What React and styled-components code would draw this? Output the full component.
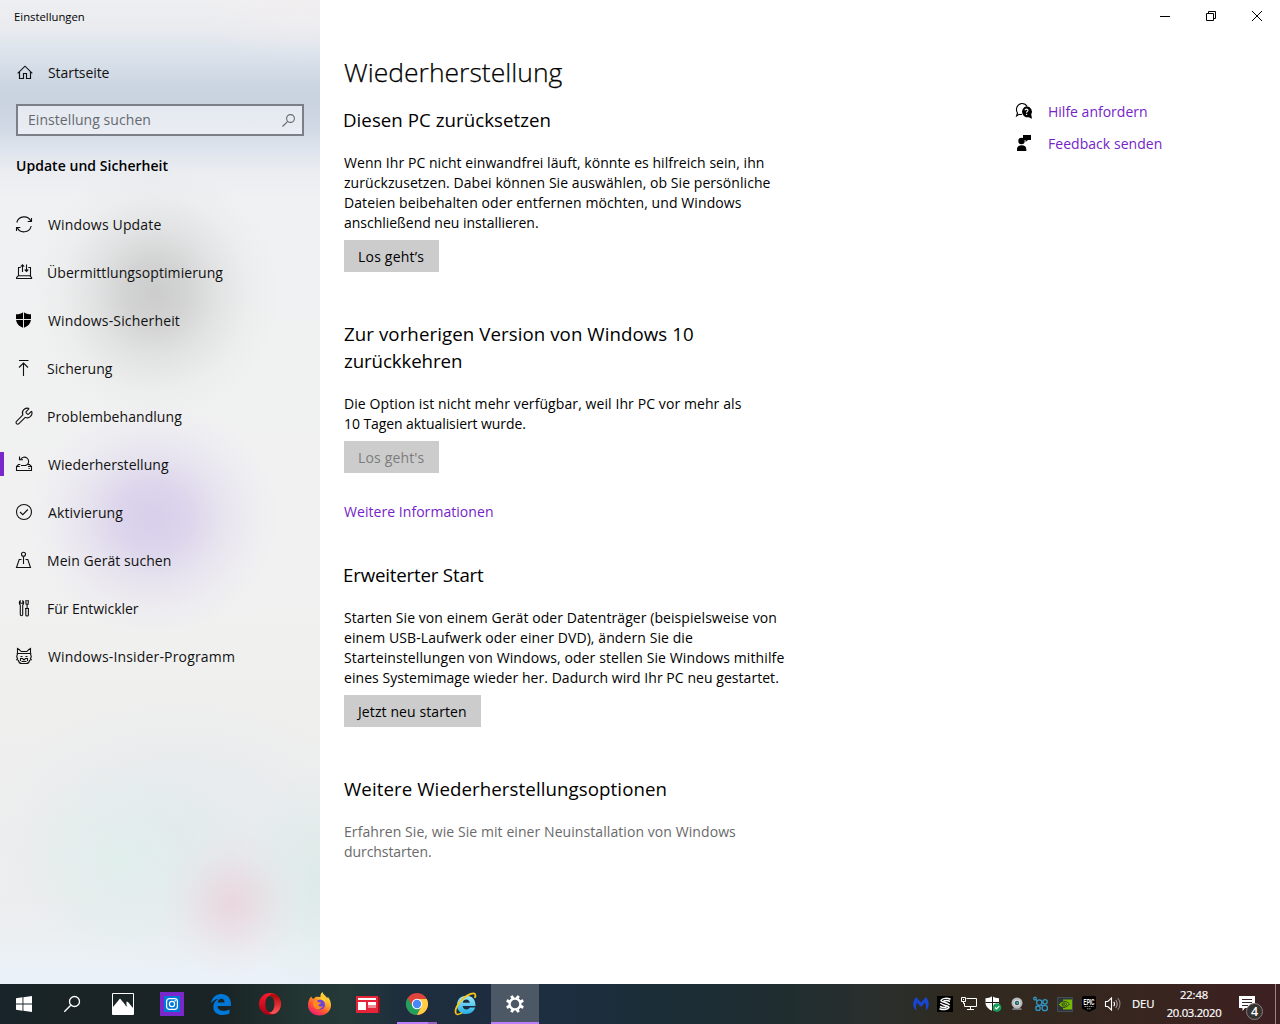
import React from "react";
import styled, { createGlobalStyle } from "styled-components";

const GlobalStyle = createGlobalStyle`
    * {
        box-sizing: border-box;
    }
    body {
        margin: 0;
        overflow: hidden;
        font-family: "Open Sans", "Noto Sans", sans-serif;
        font-size: 14px;
        line-height: 20px;
        color: #000;
        background: #fff;
    }
    svg {
        display: block;
        overflow: visible;
        flex: none;
    }
`;

const Screen = styled.div`
    width: 1280px;
    height: 1024px;
    display: flex;
    flex-direction: column;
    background: #fff;
`;

const Window = styled.div`
    flex: 1;
    display: flex;
    min-height: 0;
`;

/* text helper: one unwrapped line with its own tracking */
const Line = styled.span`
    display: block;
    white-space: nowrap;
    letter-spacing: ${p => p.$ls || 0}px;
`;

/* ---------- sidebar ---------- */

const Sidebar = styled.div`
    width: 320px;
    height: 984px;
    flex: none;
    background:
        radial-gradient(ellipse 125px 130px at 155px 293px, rgba(115,115,112,0.29), rgba(118,118,116,0.24) 25%, rgba(130,130,130,0.13) 50%, rgba(150,150,150,0.04) 76%, transparent 100%),
        radial-gradient(ellipse 125px 115px at 153px 518px, rgba(150,118,220,0.28), rgba(152,120,218,0.23) 28%, rgba(160,130,222,0.12) 55%, rgba(175,150,240,0.05) 78%, transparent 100%),
        radial-gradient(ellipse 70px 75px at 232px 904px, rgba(238,175,192,0.34), rgba(235,180,196,0.22) 35%, rgba(235,190,202,0.08) 68%, transparent 100%),
        radial-gradient(ellipse 90px 120px at 330px 885px, rgba(205,232,226,0.55), rgba(205,232,226,0.2) 55%, transparent 100%),
        radial-gradient(ellipse 110px 100px at 122px 860px, rgba(220,240,234,0.6), rgba(220,240,234,0.25) 50%, transparent 100%),
        radial-gradient(ellipse 190px 140px at 180px 835px, rgba(218,230,236,0.5), rgba(218,230,236,0.28) 50%, transparent 100%),
        radial-gradient(ellipse 110px 60px at 300px 0, rgba(243,238,240,0.7), transparent 100%),
        linear-gradient(to bottom, #eeeff1 0, #e9ebef 28px, #dce3ec 54px, #ccd6e2 84px, #c9d3df 100px, #cfd8e4 125px, #dde3ec 148px, #ebedf1 172px, #f0f1f2 200px, #f1f1f1 560px, #efefee 700px, #ecedee 900px, #ebf1f6 965px, #eaf1f9 984px);
`;

const WindowTitle = styled.div`
    height: 33px;
    padding: 1px 0 0 14px;
    font-size: 11.3px;
    line-height: 32px;
`;

const NavItem = styled.div`
    position: relative;
    height: 48px;
    padding-left: 16px;
    display: flex;
    align-items: center;
    gap: ${p => p.$gap || 16}px;
    color: #111;
`;

const HomeItem = styled(NavItem)`
    margin-top: 16px;
`;

const ActiveBar = styled.div`
    position: absolute;
    left: 0;
    top: 11px;
    width: 4px;
    height: 24px;
    background: #7a28cb;
`;

const SearchBox = styled.div`
    margin: 7px 16px 0;
    height: 32px;
    border: 2px solid #7b7f87;
    background: rgba(255,255,255,0.5);
    padding: 0 7px 0 10px;
    display: flex;
    align-items: center;
    justify-content: space-between;
    color: #65696f;
`;

const Category = styled.div`
    margin: 20px 0 0 16px;
    font-weight: 600;
`;

const Nav = styled.div`
    margin-top: 25px;
`;

/* ---------- content ---------- */

const Main = styled.div`
    flex: 1;
    display: flex;
    flex-direction: column;
`;

const Controls = styled.div`
    height: 32px;
    display: flex;
    justify-content: flex-end;
`;

const Control = styled.div`
    width: 46px;
    height: 32px;
    display: flex;
    align-items: center;
    justify-content: center;
`;

const Content = styled.div`
    display: flex;
    padding: 22px 0 0 24px;
`;

const Column = styled.div`
    width: 672px;
    flex: none;
`;

const Title = styled.h1`
    margin: 0 0 16px;
    font-size: 26.5px;
    font-weight: 300;
    line-height: 36px;
    color: #000;
    -webkit-text-stroke: 0.25px #000;
`;

const Section = styled.div`
    margin-bottom: ${p => p.$after || 48}px;
`;

const Heading = styled.h2`
    margin: 0 0 20px ${p => (p.$outdent ? -1 : 0)}px;
    font-size: 18.7px;
    font-weight: 400;
    line-height: 27px;
`;

const Text = styled.div`
    color: ${p => (p.$muted ? "#6a6a6a" : "#000")};
`;

const Button = styled.div`
    margin-top: 7px;
    width: ${p => p.$width}px;
    height: 32px;
    padding: 7px 14px 0;
    background: #ccc;
    line-height: 20px;
    color: ${p => (p.$disabled ? "#7c7c7c" : "#000")};
`;

const Link = styled.div`
    color: #7424c8;
`;

const MoreLink = styled(Link)`
    margin-top: 29px;
`;

const Aside = styled.div`
    padding-top: 42px;
`;

const HelpRow = styled.div`
    height: 32px;
    display: flex;
    align-items: center;
    gap: 16px;
`;

/* ---------- taskbar ---------- */

const Taskbar = styled.div`
    height: 40px;
    display: flex;
    background: linear-gradient(to right, #18242a 0, #1a2426 60px, #1a2325 220px, #223533 300px, #243a38 345px, #1e2e3d 400px, #1d2d3f 470px, #1c2e40 560px, #1b2d37 650px, #1f2d30 780px, #2a2f2c 880px, #30291f 960px, #33281f 1050px, #38251f 1150px, #3d2022 1280px);
    color: #fff;
`;

const Task = styled.div`
    position: relative;
    width: 48px;
    height: 40px;
    margin-left: ${p => p.$gap || 0}px;
    display: flex;
    align-items: center;
    justify-content: center;
    background: ${p => (p.$active ? "#4c5866" : "transparent")};
`;

const Underline = styled.div`
    position: absolute;
    left: ${p => p.$left}px;
    bottom: 0;
    width: ${p => p.$width}px;
    height: 2px;
    background: ${p => p.$color};
`;

const Tray = styled.div`
    margin-left: auto;
    display: flex;
    align-items: center;
    font-size: 11.3px;
`;

const TrayIcon = styled.div`
    width: 24px;
    height: 40px;
    display: flex;
    align-items: center;
    justify-content: center;
`;

const Lang = styled.div`
    width: 35px;
    padding-left: 7px;
    -webkit-text-stroke: 0.2px #fff;
`;

const Clock = styled.div`
    width: 68px;
    line-height: 18px;
    display: flex;
    flex-direction: column;
    align-items: center;
    -webkit-text-stroke: 0.2px #fff;
`;

const Notifications = styled.div`
    position: relative;
    width: 48px;
    height: 40px;
    padding: 12px 0 0 11px;
    border-right: 1px solid #948685;
    margin-right: 4px;
`;

const Badge = styled.div`
    position: absolute;
    left: 18px;
    top: 19px;
    width: 17px;
    height: 17px;
    border-radius: 50%;
    border: 1px solid #87807e;
    background: #353332;
    font-size: 12.5px;
    font-weight: 600;
    line-height: 15px;
    text-align: center;
`;

/* ---------- line icons, 16px grid ---------- */

function Glyph(props) {
    return (
        <svg width="16" height="16" viewBox="0 0 16 16" fill="none" stroke={props.color || "#111"} strokeWidth={props.w || 1}>
            {props.children}
        </svg>
    );
}

const icons = {
    home: <Glyph w={1.15}><path d="M1.7 8.3 9 1.2l7.3 7.1M3.5 7v6.5h4v-5h3v5h4V7" /></Glyph>,
    update: (
        <Glyph w={1.1}>
            <path d="M.8 5.500A7.500 7.500 0 0 1 15 4.500M15.200 9A7.500 7.500 0 0 1 1 10.300" />
            <path d="M15.500 1v3.500h-3.800M.5 14v-3.500h3.800" />
        </Glyph>
    ),
    delivery: (
        <Glyph w={1.1}>
            <path d="M4.700 2.500H2.500v8.200h12V2.500h-2.200M2.500 10.700.6 12.500v1h15v-1l-2-1.800" />
            <path d="M6.500 7V-.3M4.700 1.600 6.500-.3l1.700 1.900M10.500-.5v6.800M8.700 4.500l1.800 1.900 1.800-1.900" />
        </Glyph>
    ),
    shield: (
        <Glyph>
            <path d="M0 1.300C3 1.300 5.500.5 7.500-1 9.500.5 12 1.300 15 1.300V6c0 4.500-3.500 7.500-7.500 9C3.500 13.500 0 10.500 0 6z" fill="#000" stroke="none" />
            <path d="M7.500-1v16M0 6.500h15" stroke="#e4e4e4" />
        </Glyph>
    ),
    backup: <Glyph w={1.1}><path d="M3-.5h9.500M7.500 15V2M3 6.500 7.500 2 12 6.500" /></Glyph>,
    wrench: (
        <svg width="16" height="16" viewBox="2 3 20 20" fill="none" stroke="#111" strokeWidth="1.350">
            <path d="M14.700 6.300a1 1 0 0 0 0 1.400l1.600 1.600a1 1 0 0 0 1.400 0l3.106-3.105c.32-.322.863-.22.983.218a6 6 0 0 1-8.259 7.057l-7.910 7.910a1 1 0 0 1-2.999-3l7.910-7.910a6 6 0 0 1 7.057-8.259c.438.12.540.662.219.984z" />
        </svg>
    ),
    recovery: (
        <Glyph w={1.1}>
            <path d="M4.300 7.500H2.500L.5 9.500v4h15v-4l-2-2h-1.700M.5 9.500h3.300M12 9.500h3.500" />
            <path d="M4.500 2.500A4.300 4.300 0 1 1 11 7.800L9.500 8.500H5" />
            <path d="M3.500-.5v3.300H7" />
            <path d="M12.500 11.500h1.200" />
        </Glyph>
    ),
    activation: <Glyph w={1.1}><circle cx="8" cy="7" r="7.500" /><path d="m4 7 2.800 2.700 5-5.200" /></Glyph>,
    find: (
        <Glyph w={1.1}>
            <circle cx="7.500" cy="1.200" r="2" />
            <path d="M7.500 3.200V11M5.500 6.500H3.200L.5 14.500h14l-2.700-8H9.500" />
        </Glyph>
    ),
    developers: (
        <Glyph w={1.1}>
            <path d="M4.200-.3C3 .2 3 3.300 4.300 4v9.500c0 1.600 2.400 1.600 2.400 0V4C8 3.300 8 .2 6.800-.3v2.500H4.200zM9.800 14V7.500h2.600V14c0 1.300-2.600 1.300-2.600 0M11.100 7.500V3.300M10.100 3.300 9.800-.3h2.600l-.3 3.600zM9 7.500h4" />
        </Glyph>
    ),
    insider: (
        <Glyph w={1.1}>
            <path d="M1.500 5V-.5C3 .3 4.300 1.500 5.200 2.500h5.600c.9-1 2.200-2.200 3.700-3V5M.7 4.500h14.600M1.500 4.700.7 8l.9 1.200-.9 1.500 1.700.6c.3 1.800 1.500 3.200 3.100 3.200h5c1.600 0 2.800-1.400 3.100-3.200l1.700-.6-.9-1.500.9-1.200-.8-3.300" />
            <path d="M4.500 7.500h2M9.500 7.500h2M4.500 12V9.500h2L8 11l1.500-1.500h2V12M5.500 12.500h5" />
        </Glyph>
    ),
};

const navItems = [
    { icon: "update", label: "Windows Update", ls: 0.166 },
    { icon: "delivery", label: "Übermittlungsoptimierung", ls: 0.075, gap: 15 },
    { icon: "shield", label: "Windows-Sicherheit", ls: 0.16 },
    { icon: "backup", label: "Sicherung", ls: 0.07, gap: 15 },
    { icon: "wrench", label: "Problembehandlung", ls: 0.065, gap: 15 },
    { icon: "recovery", label: "Wiederherstellung", ls: 0.03, active: true },
    { icon: "activation", label: "Aktivierung", ls: 0.13 },
    { icon: "find", label: "Mein Gerät suchen", ls: 0.06, gap: 15 },
    { icon: "developers", label: "Für Entwickler", ls: -0.04, gap: 15 },
    { icon: "insider", label: "Windows-Insider-Programm", ls: 0.168 },
];

/* ---------- taskbar icons ---------- */

const StartIcon = () => (
    <svg width="16" height="16" viewBox="0 0 16 16" fill="#fff">
        <path d="M0 2.200 6.500 1.300v6.200H0zM7.400 1.200 16 0v7.500H7.400zM0 8.500h6.500v6.200L0 13.800zM7.400 8.500H16V16l-8.600-1.200z" />
    </svg>
);

const SearchIcon = () => (
    <svg width="16" height="16" viewBox="0 0 16 16" fill="none" stroke="#fff" strokeWidth="1.300">
        <circle cx="10.500" cy="5.500" r="5" />
        <path d="M6.800 9.200.3 15.700" />
    </svg>
);

const PhotosIcon = () => (
    <svg width="22" height="22" viewBox="0 0 22 22">
        <path d="M.5.5h21v21H.5z" fill="none" stroke="#fff" />
        <path d="M1 14 8 5.500l6.500 7.700V8.500l1.500.5 5 6V21H1z" fill="#fff" />
        <path d="m13 11 1.800 2.500" stroke="#1a2325" strokeWidth=".7" />
    </svg>
);

const InstagramIcon = () => (
    <svg width="24" height="24" viewBox="0 0 24 24" fill="none">
        <path d="M0 0h24v24H0z" fill="#7a28cb" />
        <path d="M4 4h16v16H4z" fill="#0078d7" />
        <rect x="6.600" y="6.600" width="10.800" height="10.800" rx="2.800" stroke="#fff" strokeWidth="1.200" />
        <circle cx="12" cy="12" r="2.600" stroke="#fff" strokeWidth="1.200" />
        <circle cx="15.200" cy="8.800" r=".8" fill="#fff" />
    </svg>
);

const EdgeIcon = () => (
    <svg width="20" height="21" viewBox="0 0 20 21">
        <path d="M0 9.300C.8 3.700 4.900 0 10.200 0 16.200 0 20 4.200 20 10v2H6.500c.2 3.300 2.900 4.900 6.300 4.900 2.200 0 4.100-.6 5.700-1.600v4.300c-1.900 1-4.200 1.400-6.700 1.400C6 21 2.300 17.800 2.300 12.900c0-3.700 2.100-6.700 5.200-8.200C4.300 5 1.700 6.600 0 9.300m6.700-.9h6.900c0-2.200-1.100-3.700-3.200-3.700-2 0-3.300 1.500-3.700 3.700" fill="#0078d7" />
    </svg>
);

const OperaIcon = () => (
    <svg width="22" height="22" viewBox="0 0 22 22">
        <defs>
            <linearGradient id="opera" x1="0" y1="0" x2="0" y2="1">
                <stop offset="0" stopColor="#ff1b2d" />
                <stop offset="1" stopColor="#a70014" />
            </linearGradient>
            <linearGradient id="operaRight" x1="0" y1="0" x2="0" y2="1">
                <stop offset="0" stopColor="#b00000" />
                <stop offset="1" stopColor="#ff5a5f" />
            </linearGradient>
        </defs>
        <path d="M11 0a11 11 0 1 0 0 22 11 11 0 0 0 0-22m0 3c2.800 0 4.600 3.500 4.600 8S13.800 19 11 19s-4.600-3.500-4.600-8S8.200 3 11 3" fill="url(#opera)" />
        <path d="M9 2.500C14.500-.5 17.800 2.500 18.300 2.800a11 11 0 0 1 0 16.400c-2.500 2.200-6 2.200-9.300.2 3.700 1 6.600-2.900 6.600-8.400S12.700 1.500 9 2.500" fill="url(#operaRight)" />
    </svg>
);

const FirefoxIcon = () => (
    <svg width="23" height="24" viewBox="0 0 23 24">
        <defs>
            <linearGradient id="fox" x1="0.850" y1="0" x2="0.200" y2="1">
                <stop offset="0" stopColor="#fff14f" />
                <stop offset=".35" stopColor="#ffb02a" />
                <stop offset=".65" stopColor="#ff5a2e" />
                <stop offset="1" stopColor="#f0127e" />
            </linearGradient>
        </defs>
        <path d="M3 4.500 5 7l3-2.300L12.500 5C12 3 13 1 14.500 0c.5 2.500 3 3.500 4.500 6l1-1c2 2.500 3 5.300 3 8.200C23 19 18 23.500 11.500 23.500S0 19 0 13c0-3 1-6 3-8.500" fill="url(#fox)" />
        <circle cx="12" cy="12.700" r="5" fill="#6b45d8" />
        <path d="M5.500 9.500c2-1 4-.5 5 .7l2.500.3c0 1.200-1.500 1.500-2.500 2-.2 2 2 3 4.500 1.500-1.500 3.500-6.500 4.500-9 1-1-1.500-1.200-3.700-.5-5.500" fill="#ff8a22" />
        <path d="M12.500 5c2.500 0 5.500 2.500 5.500 6.500 0-1-1.500-3-3-3.500z" fill="#ffd83a" />
    </svg>
);

const NewsIcon = () => (
    <svg width="24" height="17" viewBox="0 0 24 17">
        <path d="M2 1h22v16H2z" fill="#9d0f20" />
        <path d="M0 0h22v17H0z" fill="#e5243a" />
        <path d="M2 2h18v2H2zM2 6h8v8H2z" fill="#fff" />
        <path d="M12 6h8v3h-8z" fill="#fff" />
        <path d="M12 9h8v3h-8z" fill="#f08c98" />
    </svg>
);

const ChromeIcon = () => (
    <svg width="22" height="22" viewBox="0 0 22 22">
        <circle cx="11" cy="11" r="11" fill="#e0443a" />
        <path d="M6.700 13.500 1.700 5.100A11 11 0 0 0 11 22l4.300-8.500z" fill="#1fa15d" />
        <path d="M15.300 13.500 11 22A11 11 0 0 0 20.800 6H11z" fill="#ffce44" />
        <circle cx="11" cy="11" r="5.200" fill="#fff" />
        <circle cx="11" cy="11" r="4.200" fill="#4788f4" />
    </svg>
);

const ExplorerIcon = () => (
    <svg width="24" height="24" viewBox="0 0 24 24">
        <defs>
            <linearGradient id="ie" x1="0" y1="0" x2="0" y2="1">
                <stop offset="0" stopColor="#9be9fd" />
                <stop offset="1" stopColor="#25aee6" />
            </linearGradient>
        </defs>
        <path d="M21.500 14H8.700c.2 2.300 1.700 3.500 3.700 3.500 1.600 0 2.700-.7 3.400-1.900h5.400c-1.300 4-4.600 6.400-9 6.400C6.500 22 3 18.200 3 12.900S6.700 3.800 12.300 3.800c6 0 9.400 3.900 9.200 10.200M8.800 10.700h7c-.2-1.900-1.500-3.200-3.400-3.200s-3.300 1.200-3.600 3.200" fill="url(#ie)" />
        <path d="M2.300 22C-.2 19 3.500 11.500 9.500 6.300 14.500 2 19.700.3 21 2c.7 1 .5 2.400-.2 4" fill="none" stroke="#f6c51c" strokeWidth="1.800" />
        <path d="M2.300 22c1.300.9 3.800 0 6-1.300" fill="none" stroke="#f6c51c" strokeWidth="1.500" />
    </svg>
);

const teeth = [0, 45, 90, 135, 180, 225, 270, 315];

const GearIcon = () => (
    <svg width="18" height="18" viewBox="-9 -9 18 18">
        <circle r="5.400" fill="none" stroke="#fff" strokeWidth="2.300" />
        {teeth.map(a => (
            <path key={a} d="M-1.700-6h3.400l-.4-3h-2.600z" fill="#fff" transform={`rotate(${a + 22.5})`} />
        ))}
    </svg>
);

/* ---------- tray icons ---------- */

const MalwareIcon = () => (
    <svg width="16" height="14" viewBox="0 0 16 14">
        <path d="M3.500 13.500C-.5 11-1 5 3 0l5 5.500L13 0c4 5 3.500 11-.5 13.500.8-2.500.7-5.500-.5-8L8 10 4 5.500c-1.200 2.500-1.300 5.500-.5 8" fill="#1746d2" />
    </svg>
);

const EngineIcon = () => (
    <svg width="16" height="16" viewBox="0 0 16 16">
        <path d="M0 0h16v16H0z" fill="#000" />
        <path d="M13.500 3.300C10 1.800 5.500 2 4 4.300c-.7 1.500 8 2.500 8.500 4.700M13 5.500C11 4.500 8 4.300 6.500 5M2.500 12.700c3.500 1.500 8 1 9.500-1.200.7-1.500-8-2.500-8.500-4.700M3 10.500c2 1 5 1.200 6.500.5" fill="none" stroke="#fff" strokeWidth="1.500" />
    </svg>
);

const NetworkIcon = () => (
    <svg width="16" height="14" viewBox="0 0 16 14" fill="none" stroke="#fff">
        <path d="M5.500 1.500h10v8h-12V6M9.500 9.500v3M6 12.500h7" />
        <path d="M.5.5h4v4h-4zM2.500 4.500v2.300" />
        <path d="M2 2.500h1" />
    </svg>
);

const DefenderIcon = () => (
    <svg width="16" height="16" viewBox="0 0 16 16">
        <path d="M.5 2.200C3 2.200 5.300 1.500 7.300 0c2 1.500 4.200 2.200 6.700 2.200v4.300c0 4-3 6.800-6.700 8.300C3.500 13.300.5 10.500.5 6.500z" fill="#fff" />
        <path d="M7.500 0v15M.5 6.500H14" stroke="#211b18" />
        <circle cx="12" cy="11.500" r="4.300" fill="#16a05a" />
        <path d="m10 11.500 1.500 1.500 2.700-2.900" fill="none" stroke="#fff" strokeWidth="1.200" />
    </svg>
);

const WebcamIcon = () => (
    <svg width="12" height="14" viewBox="0 0 12 14">
        <path d="M1 13c0-2 2-2.500 5-2.500s5 .5 5 2.500z" fill="#77777a" />
        <circle cx="6" cy="6" r="5.500" fill="#b9babb" />
        <circle cx="6" cy="6" r="3.300" fill="#dcdede" />
        <circle cx="6" cy="6" r="2.200" fill="#30545b" />
        <circle cx="6.300" cy="5.800" r="1.100" fill="#33b6b8" />
    </svg>
);

const BubblesIcon = () => (
    <svg width="16" height="16" viewBox="0 0 16 16" fill="none" stroke="#3196c4" strokeWidth="1.300">
        <circle cx="6.300" cy="6.600" r="2.700" />
        <circle cx="12" cy="5.800" r="2.200" />
        <circle cx="5" cy="12.200" r="2.200" />
        <circle cx="11.800" cy="12" r="2.700" />
        <circle cx="2" cy="2.500" r="1.300" />
        <path d="m3 3.500 1.500 1.400M8 8.500l2 1.800M8.800 6h1.200" />
    </svg>
);

const NvidiaIcon = () => (
    <svg width="16" height="15" viewBox="0 0 16 15">
        <path d="M.5.5h15v14H.5z" fill="#303438" stroke="#414c59" />
        <path d="M6 2.500h9v10H6z" fill="#76b900" />
        <path d="M1.500 7.500C4 3.500 9 3 12.500 7 9.500 11 4.500 12 1.500 7.500z" fill="#76b900" stroke="#26302a" strokeWidth=".8" />
        <path d="M4 7.500c1.500-2 4-2.300 6 0-2 2-4 2-5 .5 1-1 2-1.300 3-.5" fill="none" stroke="#26302a" strokeWidth=".8" />
    </svg>
);

const EpicText = styled.text`
    font-family: "Liberation Sans", sans-serif;
    font-weight: 700;
    fill: #fff;
`;

const EpicIcon = () => (
    <svg width="14" height="16" viewBox="0 0 14 16">
        <path d="M1 0h12l1 1v11.500L7 16 0 12.500V1z" fill="#000" />
        <EpicText x="1.500" y="8.500" fontSize="9" textLength="11" lengthAdjust="spacingAndGlyphs">EPIC</EpicText>
        <path d="M2.500 10.500h9M5 12.800h4" stroke="#999" strokeDasharray="1.500 .6" />
    </svg>
);

const SpeakerIcon = () => (
    <svg width="16" height="14" viewBox="0 0 16 14" fill="none" stroke="#fff" strokeWidth="1.100">
        <path d="M.5 4.500h2.300L6.500 1v12L2.800 9.500H.5z" />
        <path d="M8.700 4.800c1 1.200 1 3.200 0 4.400" />
        <path d="M10.700 3c2 2.200 2 5.800 0 8" stroke="#aaa3a0" />
        <path d="M12.700 1.200c3 3 3 8.600 0 11.600" stroke="#8c8380" />
    </svg>
);

const trayIcons = [MalwareIcon, EngineIcon, NetworkIcon, DefenderIcon, WebcamIcon, BubblesIcon, NvidiaIcon, EpicIcon, SpeakerIcon];

const MessageIcon = () => (
    <svg width="16" height="16" viewBox="0 0 16 16">
        <path d="M0 0h16v12H6l-2.500 3v-3H0z" fill="#fff" />
        <path d="M3 3.500h10M3 6.500h10M3 9.500h6" stroke="#3b2422" />
    </svg>
);

function TitleControls() {
    return (
        <Controls>
            <Control>
                <svg width="10" height="10" viewBox="0 0 10 10"><path d="M0 5.500h10" stroke="#000" /></svg>
            </Control>
            <Control>
                <svg width="10" height="10" viewBox="0 0 10 10" fill="none" stroke="#000"><path d="M.5 2.500h7v7h-7zM2.500 2.500v-2h7v7h-2" /></svg>
            </Control>
            <Control>
                <svg width="10" height="10" viewBox="0 0 10 10" stroke="#000"><path d="m0 0 10 10M10 0 0 10" /></svg>
            </Control>
        </Controls>
    );
}

function SettingsNav() {
    return (
        <Sidebar>
            <WindowTitle><Line>Einstellungen</Line></WindowTitle>
            <HomeItem>
                {icons.home}
                <Line $ls={-0.07}>Startseite</Line>
            </HomeItem>
            <SearchBox>
                <Line $ls={0.06}>Einstellung suchen</Line>
                <svg width="13" height="13" viewBox="0 0 13 13" fill="none" stroke="#65696f" strokeWidth="1.100">
                    <circle cx="8.500" cy="4.500" r="3.900" />
                    <path d="M5.700 7.300.5 12.500" />
                </svg>
            </SearchBox>
            <Category><Line $ls={0.04}>Update und Sicherheit</Line></Category>
            <Nav>
                {navItems.map(item => (
                    <NavItem key={item.icon} $gap={item.gap}>
                        {item.active && <ActiveBar />}
                        {icons[item.icon]}
                        <Line $ls={item.ls}>{item.label}</Line>
                    </NavItem>
                ))}
            </Nav>
        </Sidebar>
    );
}

function Recovery() {
    return (
        <Column>
            <Title><Line $ls={0.01}>Wiederherstellung</Line></Title>
            <Section>
                <Heading $outdent><Line $ls={0.04}>Diesen PC zurücksetzen</Line></Heading>
                <Text>
                    <Line $ls={0.051}>Wenn Ihr PC nicht einwandfrei läuft, könnte es hilfreich sein, ihn</Line>
                    <Line $ls={0.062}>zurückzusetzen. Dabei können Sie auswählen, ob Sie persönliche</Line>
                    <Line $ls={0.088}>Dateien beibehalten oder entfernen möchten, und Windows</Line>
                    <Line $ls={-0.02}>anschließend neu installieren.</Line>
                </Text>
                <Button $width={95}><Line $ls={0.2}>Los geht’s</Line></Button>
            </Section>
            <Section $after={39}>
                <Heading>
                    <Line $ls={0.07}>Zur vorherigen Version von Windows 10</Line>
                    <Line $ls={-0.1}>zurückkehren</Line>
                </Heading>
                <Text>
                    <Line $ls={0.09}>Die Option ist nicht mehr verfügbar, weil Ihr PC vor mehr als</Line>
                    <Line $ls={-0.08}>10 Tagen aktualisiert wurde.</Line>
                </Text>
                <Button $width={95} $disabled><Line $ls={0.15}>Los geht's</Line></Button>
                <MoreLink><Line $ls={0.05}>Weitere Informationen</Line></MoreLink>
            </Section>
            <Section>
                <Heading $outdent><Line $ls={-0.19}>Erweiterter Start</Line></Heading>
                <Text>
                    <Line $ls={0.07}>Starten Sie von einem Gerät oder Datenträger (beispielsweise von</Line>
                    <Line $ls={0.088}>einem USB-Laufwerk oder einer DVD), ändern Sie die</Line>
                    <Line $ls={0.105}>Starteinstellungen von Windows, oder stellen Sie Windows mithilfe</Line>
                    <Line $ls={0.048}>eines Systemimage wieder her. Dadurch wird Ihr PC neu gestartet.</Line>
                </Text>
                <Button $width={137}><Line $ls={0.1}>Jetzt neu starten</Line></Button>
            </Section>
            <Section>
                <Heading><Line $ls={0.08}>Weitere Wiederherstellungsoptionen</Line></Heading>
                <Text $muted>
                    <Line $ls={0.075}>Erfahren Sie, wie Sie mit einer Neuinstallation von Windows</Line>
                    <Line $ls={-0.07}>durchstarten.</Line>
                </Text>
            </Section>
        </Column>
    );
}

function Help() {
    return (
        <Aside>
            <HelpRow>
                <svg width="16" height="16" viewBox="0 0 16 16">
                    <path d="M6 10.300C4.500 10.800 3.500 10.500 3 10.300L.6 12l.9-3C-.6 5.500.5.500 5.500-.5 8-.7 10 .5 11 2.300" fill="none" stroke="#000" strokeWidth="1.100" />
                    <path d="M10.500 2.300a5.300 5.300 0 0 1 4.700 8l.8 4.400-3.300-1.500a5.400 5.400 0 1 1-2.200-10.900" fill="#000" />
                    <path d="M9 6.300c.2-1.600 3-1.500 2.900.1 0 1-1.300 1.100-1.300 2.300M10.600 9.700v1.200" fill="none" stroke="#fff" strokeWidth="1.100" />
                </svg>
                <Link><Line>Hilfe anfordern</Line></Link>
            </HelpRow>
            <HelpRow>
                <svg width="16" height="16" viewBox="0 0 16 16">
                    <path d="M7-1h8v5h-3l-2.500 2V4H7z" />
                    <circle cx="5.500" cy="5" r="3.200" />
                    <path d="M1 15v-2c0-2.300 1.800-3.700 4.700-3.700s4.600 1.400 4.600 3.700v2z" />
                </svg>
                <Link><Line $ls={0.04}>Feedback senden</Line></Link>
            </HelpRow>
        </Aside>
    );
}

function Bar() {
    return (
        <Taskbar>
            <Task><StartIcon /></Task>
            <Task><SearchIcon /></Task>
            <Task $gap={3}><PhotosIcon /></Task>
            <Task $gap={1}><InstagramIcon /></Task>
            <Task $gap={1}><EdgeIcon /></Task>
            <Task $gap={1}><OperaIcon /></Task>
            <Task $gap={1}><FirefoxIcon /></Task>
            <Task $gap={1}><NewsIcon /></Task>
            <Task $gap={1}>
                <ChromeIcon />
                <Underline $left={4} $width={31} $color="#bc7dfa" />
                <Underline $left={35} $width={9} $color="#9364c0" />
            </Task>
            <Task $gap={1}><ExplorerIcon /></Task>
            <Task $gap={1} $active>
                <GearIcon />
                <Underline $left={0} $width={48} $color="#bc7dfa" />
            </Task>
            <Tray>
                {trayIcons.map((Icon, i) => <TrayIcon key={i}><Icon /></TrayIcon>)}
                <Lang><Line $ls={-0.1}>DEU</Line></Lang>
                <Clock>
                    <Line $ls={-0.2}>22:48</Line>
                    <Line $ls={-0.3}>20.03.2020</Line>
                </Clock>
                <Notifications>
                    <MessageIcon />
                    <Badge>4</Badge>
                </Notifications>
            </Tray>
        </Taskbar>
    );
}

function App() {
    return (
        <Screen>
            <GlobalStyle />
            <Window>
                <SettingsNav />
                <Main>
                    <TitleControls />
                    <Content>
                        <Recovery />
                        <Help />
                    </Content>
                </Main>
            </Window>
            <Bar />
        </Screen>
    );
}

export default App;
